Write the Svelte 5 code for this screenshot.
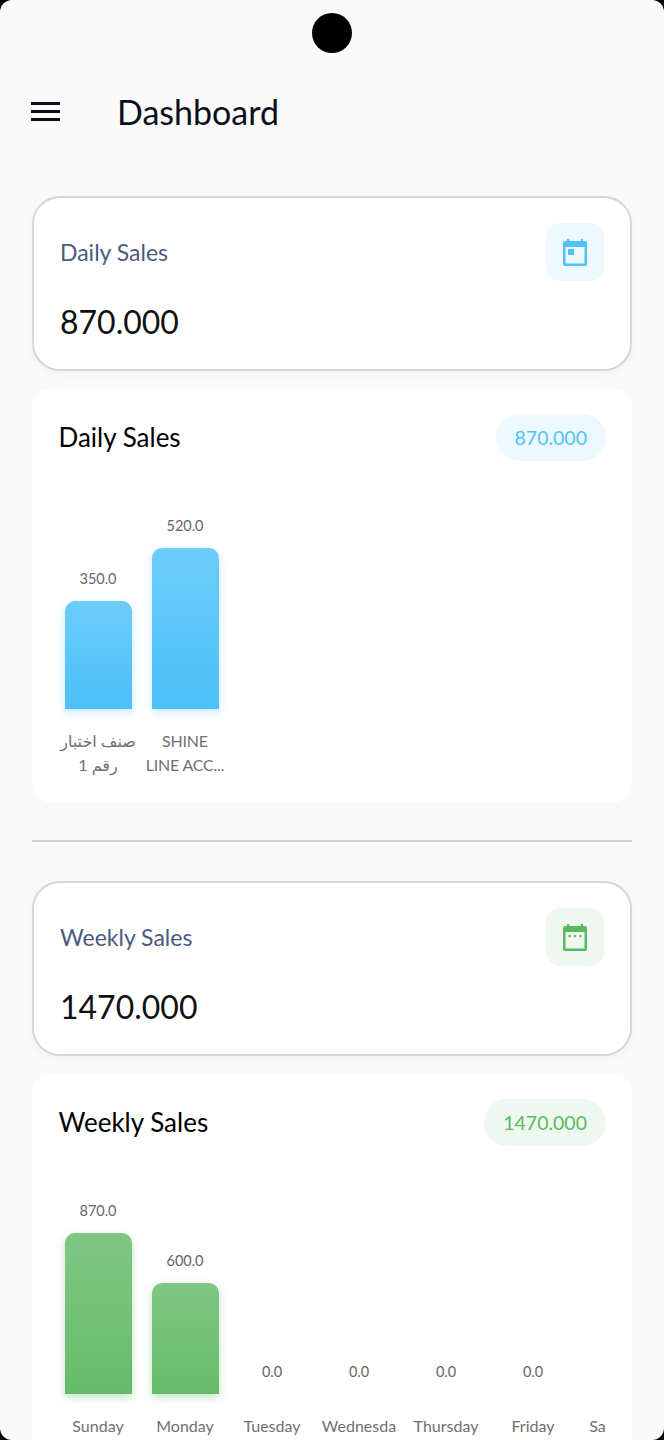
<script>
  const sections = [
    {
      title: 'Daily Sales',
      total: '870.000',
      tone: 'blue',
      icon: 'day',
      bars: [
        { value: 350, label: 'صنف اختبار رقم 1' },
        { value: 520, label: 'SHINE LINE\u00a0ACC...' },
      ],
    },
    {
      title: 'Weekly Sales',
      total: '1470.000',
      tone: 'green',
      icon: 'week',
      bars: [
        { value: 870, label: 'Sunday' },
        { value: 600, label: 'Monday' },
        { value: 0, label: 'Tuesday' },
        { value: 0, label: 'Wednesday' },
        { value: 0, label: 'Thursday' },
        { value: 0, label: 'Friday' },
        { value: 0, label: 'Saturday' },
      ],
    },
  ]

  const scale = { blue: 161 / 520, green: 161 / 870 }
</script>

<div class="screen">
  <div class="camera"></div>

  <header class="topbar">
    <button class="menu" aria-label="Menu">
      <span></span><span></span><span></span>
    </button>
    <h1>Dashboard</h1>
  </header>

  <main class="content">
    {#each sections as section, i}
      {#if i > 0}
        <hr class="divider" />
      {/if}

      <section class="summary">
        <div class="summary__top">
          <span class="summary__title">{section.title}</span>
          <div class="summary__icon {section.tone}">
            <svg width="24" height="27" viewBox="0 0 24 27" fill="currentColor">
              <rect x="4" y="0" width="2.200" height="4" />
              <rect x="17.800" y="0" width="2.200" height="4" />
              <path fill-rule="evenodd" d="M2 2H22A2 2 0 0 1 24 4V25A2 2 0 0 1 22 27H2A2 2 0 0 1 0 25V4A2 2 0 0 1 2 2ZM2.500 8V24.500H21.500V8Z" />
              {#if section.icon === 'day'}
                <rect x="5" y="10" width="6" height="6" />
              {:else}
                <rect x="5.500" y="11" width="2.200" height="2.200" />
                <rect x="10.900" y="11" width="2.200" height="2.200" />
                <rect x="16.300" y="11" width="2.200" height="2.200" />
              {/if}
            </svg>
          </div>
        </div>
        <div class="summary__value">{section.total}</div>
      </section>

      <section class="chart-card">
        <div class="chart-card__head">
          <h2>{section.title}</h2>
          <span class="pill {section.tone}">{section.total}</span>
        </div>
        <div class="chart">
          {#each section.bars as bar}
            <div class="col">
              <span class="col__value">{bar.value.toFixed(1)}</span>
              {#if bar.value > 0}
                <div class="bar {section.tone}" style="height: {bar.value * scale[section.tone]}px"></div>
              {/if}
              <div class="col__label" class:col__label--tight={section.tone === 'blue'}>{bar.label}</div>
            </div>
          {/each}
        </div>
      </section>
    {/each}
  </main>
</div>

<style>
  :global(body) {
    background: #000;
  }

  .screen {
    position: relative;
    height: 1440px;
    overflow: hidden;
    box-sizing: border-box;
    border-radius: 12px;
    background: #fafafa;
    font-family: Lato, "DejaVu Sans", sans-serif;
    color: #000;
  }

  .camera {
    position: absolute;
    top: 13px;
    left: 312px;
    width: 40px;
    height: 40px;
    border-radius: 50%;
    background: #000;
  }

  .topbar {
    display: flex;
    align-items: center;
    gap: 57px;
    height: 56px;
    padding: 83px 0 0 31px;
  }

  .menu {
    display: flex;
    flex-direction: column;
    gap: 5px;
    width: 29px;
    padding: 0;
    border: 0;
    background: none;
  }

  .menu span {
    height: 3px;
    background: #0b0f1c;
  }

  h1 {
    margin: 0;
    font-size: 34px;
    font-weight: 400;
    color: #0b0f1c;
  }

  .content {
    padding: 57px 32px 0;
  }

  .summary {
    box-sizing: border-box;
    height: 175px;
    padding: 25px 26px 0;
    border: 2px solid #d3d6de;
    border-radius: 28px;
    background: #fff;
    box-shadow: 0 3px 8px rgb(0 0 0 / 0.04);
  }

  .summary__top {
    display: flex;
    justify-content: space-between;
    align-items: flex-start;
  }

  .summary__title {
    margin-top: 15px;
    font-size: 23px;
    color: #4a5b7e;
  }

  .summary__icon {
    display: flex;
    align-items: center;
    justify-content: center;
    width: 58px;
    height: 58px;
    border-radius: 14px;
  }

  .summary__value {
    margin-top: 19px;
    font-size: 32px;
    line-height: 44px;
    color: #111;
  }

  .blue {
    color: #4fc3f7;
    background: #edf9ff;
  }

  .green {
    color: #5cb85f;
    background: #eff8f0;
  }

  .chart-card {
    box-sizing: border-box;
    height: 415px;
    margin-top: 17px;
    overflow: hidden;
    padding: 26px 26px 0 22.500px;
    border-radius: 20px;
    background: #fff;
  }

  .chart-card__head {
    display: flex;
    justify-content: space-between;
    align-items: center;
    height: 47px;
    padding-left: 4px;
  }

  h2 {
    margin: -2px 0 0;
    font-size: 26px;
    font-weight: 400;
  }

  .pill {
    padding: 0 19px;
    height: 47px;
    line-height: 47px;
    border-radius: 24px;
    font-size: 19.500px;
  }

  .chart {
    display: flex;
    align-items: flex-end;
    height: 295px;
    margin-top: 25px;
    overflow: hidden;
  }

  .col {
    display: flex;
    flex: 0 0 87px;
    flex-direction: column;
    align-items: center;
  }

  .col__value {
    margin-bottom: 12px;
    font-size: 14.500px;
    line-height: 20px;
    color: #666;
  }

  .bar {
    width: 67px;
    border-radius: 10px 10px 0 0;
  }

  .bar.blue {
    background: linear-gradient(#6dcdfa, #4bc0f8);
    box-shadow: 0 3px 8px rgb(79 195 247 / 0.35);
  }

  .bar.green {
    background: linear-gradient(#81c784, #66bb6a);
    box-shadow: 0 3px 8px rgb(76 175 80 / 0.35);
  }

  .col__label {
    box-sizing: border-box;
    width: 80px;
    height: 72px;
    padding-top: 20px;
    overflow: hidden;
    overflow-wrap: anywhere;
    font-size: 16px;
    line-height: 24px;
    text-align: center;
    color: #707070;
  }

  .col__label--tight {
    width: 87px;
    letter-spacing: -0.2px;
  }

  .divider {
    height: 2px;
    margin: 37px 0 39px;
    border: 0;
    background: #d2d2d2;
  }
</style>
